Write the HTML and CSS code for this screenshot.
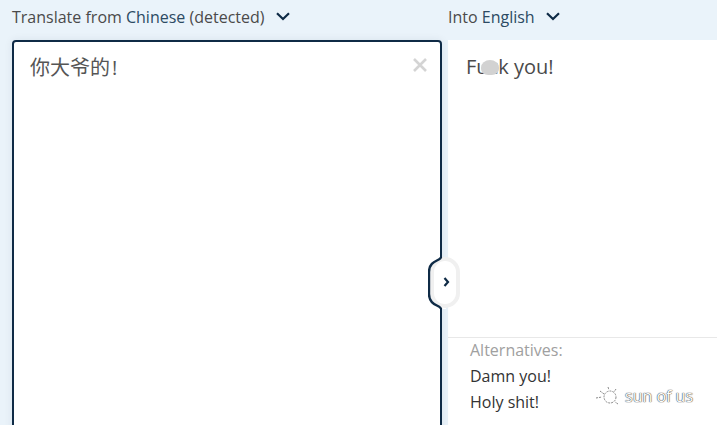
FILE: index.html
```html
<!DOCTYPE html>
<html lang="en">
<head>
<meta charset="UTF-8">
<meta name="viewport" content="width=device-width, initial-scale=1.0">
<link rel="stylesheet" href="styles.css">
<title>Translate</title>
</head>
<body>
<header class="bar">
  <div class="lang lang-from">
    <span>Translate from <em>Chinese</em> (detected)</span>
    <svg class="chev" viewBox="0 0 14 9"><path d="M1 1.2 7 7l6-5.8"/></svg>
  </div>
  <div class="lang">
    <span>Into <em>English</em></span>
    <svg class="chev" viewBox="0 0 14 9"><path d="M1 1.2 7 7l6-5.8"/></svg>
  </div>
</header>
<main class="panes">
  <section class="source">
    <p class="source-text" lang="zh">你大爷的<span class="bang">!</span></p>
    <svg class="clear" viewBox="0 0 14 14"><path d="M1 1l12 12M13 1 1 13"/></svg>
  </section>
  <section class="target">
    <p class="target-text">Fu<span class="blot">c</span>k you!</p>
    <div class="alts">
      <div class="alts-title">Alternatives:</div>
      <div class="alt">Damn you!</div>
      <div class="alt">Holy shit!</div>
    </div>
  </section>
  <button class="toggle">
    <svg viewBox="0 0 32 52">
      <path class="toggle-fill" d="M13 0C13 4 1 3 1 15V37C1 49 13 48 13 52H18V0Z"/>
      <rect class="toggle-pill" x="4" y="2" width="26" height="47" rx="13"/>
      <path class="toggle-edge" d="M13 0C13 4 1 3 1 15V37C1 49 13 48 13 52"/>
      <path class="toggle-arrow" d="M16.5 21 20 25 16.5 29"/>
    </svg>
  </button>
  <div class="mark">
    <svg viewBox="0 0 24 20"><circle cx="15" cy="11" r="6"/><path d="M1 12l6-1M5 5l4 3M13 1l1 3M21 3l-2 3M23 18l-3-2"/></svg>
    <span>sun of us</span>
  </div>
</main>
</body>
</html>
```

FILE: styles.css
```css
* { box-sizing: border-box; }
html, body { height: 100%; }
body { background-color: #eaf3fa; color: #4a4a4a; font-family: "Open Sans", "Noto Sans CJK SC", sans-serif; margin: 0; overflow: hidden; }
em { color: #2c4a63; font-style: normal; }
p { margin: 0; }

.bar { display: grid; grid-template-columns: 436px 1fr; font-size: 16px; height: 40px; padding-left: 12px; }
.lang { align-items: center; display: flex; gap: 11px; height: 33px; }
.chev { fill: none; height: 9px; stroke: #0f2b46; stroke-width: 2.2; width: 14px; }

.panes { display: grid; grid-template-columns: 430px 1fr; grid-template-rows: 385px; column-gap: 6px; padding-left: 12px; position: relative; }
.source { background-color: #fff; border: 2px solid #0f2b46; border-radius: 4px 4px 0 0; box-shadow: 0 0 8px rgba(15, 43, 70, .08); height: 400px; padding: 12px 16px; position: relative; }
.source-text { color: #555; font-size: 20px; line-height: 28px; }
.bang { margin-left: 2px; }
.clear { fill: none; height: 14px; position: absolute; right: 13px; stroke: #d4d4d4; stroke-width: 2.6; top: 16px; width: 14px; }

.target { background-color: #fff; display: flex; flex-direction: column; justify-content: space-between; }
.target-text { font-size: 20px; line-height: 28px; padding: 13px 18px; }
.blot { display: inline-block; position: relative; }
.blot::after { background-color: #d2d2d2; border-radius: 50% 50% 40% 40%; content: ""; height: 15px; left: -8px; position: absolute; top: 7px; width: 18px; }
.alts { border-top: 1px solid #e8e8e8; color: #333; font-size: 16px; height: 88px; padding: 0 22px; }
.alts-title { color: #a0a0a0; line-height: 25px; }
.alt { line-height: 26px; }

.toggle { background: none; border: 0; height: 52px; left: 428px; padding: 0; position: absolute; top: 217px; width: 32px; }
.toggle svg { display: block; height: 52px; width: 32px; }
.toggle-fill { fill: #fff; }
.toggle-pill { fill: #fff; stroke: #f0f0f0; stroke-width: 4; }
.toggle-edge { fill: none; stroke: #0f2b46; stroke-width: 2.4; }
.toggle-arrow { fill: none; stroke: #0f2b46; stroke-width: 2.2; }

.mark { align-items: center; color: #fff; display: flex; font-size: 16px; gap: 6px; left: 595px; position: absolute; text-shadow: 0 0 1px #333, 0 0 1px #333; top: 345px; }
.mark svg { fill: none; height: 20px; stroke: #888; stroke-dasharray: 2 1; width: 24px; }
```
